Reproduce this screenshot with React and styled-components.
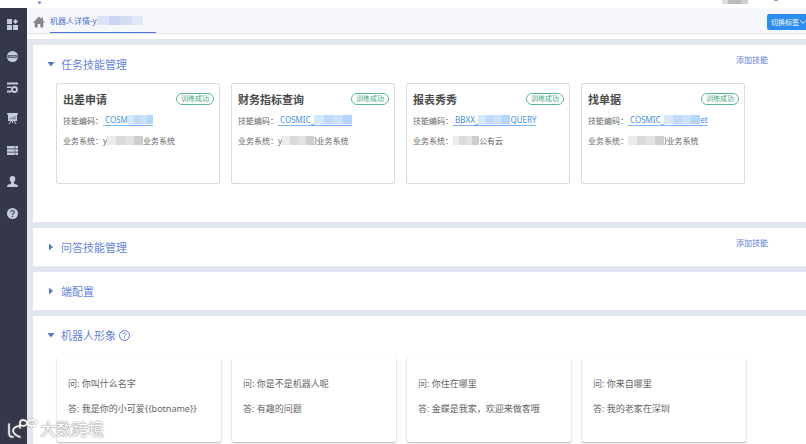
import React from 'react'
import styled, { createGlobalStyle } from 'styled-components'

const skills = [
  {
    title: '出差申请',
    code: { before: ' COSM', width: 25, after: '' },
    system: { before: 'y', width: 36, after: '业务系统' }
  },
  {
    title: '财务指标查询',
    code: { before: ' COSMIC_', width: 38, after: '' },
    system: { before: 'y', width: 32, after: ')业务系统' }
  },
  {
    title: '报表秀秀',
    code: { before: ' BBXX_', width: 32, after: 'QUERY' },
    system: { before: '', width: 26, after: '公有云' }
  },
  {
    title: '找单据',
    code: { before: ' COSMIC_', width: 36, after: 'et' },
    system: { before: '', width: 36, after: ')业务系统' }
  }
]

const dialogs = [
  { question: '你叫什么名字', answer: '我是你的小可爱{{botname}}' },
  { question: '你是不是机器人呢', answer: '有趣的问题' },
  { question: '你住在哪里', answer: '金蝶是我家，欢迎来做客哦' },
  { question: '你来自哪里', answer: '我的老家在深圳' }
]

const menu = [
  {
    label: '应用',
    icon: (
      <path d="M0 0h5v5H0zM0 6h5v5H0zM6 6h5v5H6zM8.5 0L11 2.5 8.5 5 6 2.5z" />
    )
  },
  {
    label: '机器人',
    icon: (
      <>
        <circle cx="5.5" cy="5.5" r="5.5" />
        <rect x="0.5" y="4" width="10" height="3" rx="1" fill="#5d637a" />
        <path d="M2 5.5h7" stroke="#8f97ab" />
      </>
    )
  },
  {
    label: '流程配置',
    icon: (
      <>
        <path d="M0 0.5h11v2H0zM0 4.5h4.500v1.5H0zM0 8.500h4.500v2H0z" />
        <circle
          cx="7.5"
          cy="7.5"
          r="2.5"
          fill="none"
          stroke="#c3cbdc"
          strokeWidth="1.8"
        />
      </>
    )
  },
  {
    label: '报表',
    icon: (
      <>
        <path d="M0 0h11v1.5h-1V8H1V1.5H0z" />
        <path d="M4 8L2 11M7 8l2 3M5.5 8v2" stroke="#c3cbdc" />
        <path
          d="M3 6.5V5M5 6.5V4M6.5 6.5V4.5M8 6.5V3"
          stroke="#5d637a"
          strokeWidth="0.8"
        />
      </>
    )
  },
  {
    label: '数据',
    icon: (
      <>
        <path d="M0 1h11v2.5H0zM0 4.300h11v2.5H0zM0 7.600h11v2.5H0z" />
        <path d="M8 1v9" stroke="#5d637a" strokeWidth="0.8" />
      </>
    )
  },
  {
    label: '用户',
    icon: (
      <path d="M5.5 0C7.5 0 8.4 1.3 8.3 3 8.2 4.7 7.4 5.8 6.8 6.3V7.5L10 8.7Q11 9.2 11 11H0Q0 9.2 1 8.7L4.2 7.5V6.3C3.6 5.8 2.8 4.7 2.7 3 2.6 1.3 3.5 0 5.5 0z" />
    )
  },
  {
    label: '帮助',
    icon: (
      <>
        <circle cx="5.5" cy="5.5" r="5.5" />
        <path
          d="M3.7 4.2C3.7 1.9 7.3 1.9 7.3 4.2 7.3 5.4 5.5 5.3 5.5 7M5.5 7.8V9"
          fill="none"
          stroke="#353849"
          strokeWidth="1.1"
        />
      </>
    )
  }
]

const Caret = ({ open }) => (
  <svg width="8" height="8" viewBox="0 0 8 8" fill="#5478d8" aria-hidden="true">
    <path d={open ? 'M0.5 2h7L4 6.5z' : 'M2 0.5v7L6 4z'} />
  </svg>
)

const Section = ({ title, open, action, help, grow, children }) => (
  <Panel $grow={grow}>
    <PanelHeader>
      <PanelTitle>
        <Toggle type="button" aria-expanded={!!open}>
          <Caret open={open} />
          {title}
        </Toggle>
        {help && (
          <HelpButton type="button" aria-label="帮助">
            <svg
              width="11"
              height="11"
              viewBox="0 0 11 11"
              fill="none"
              stroke="#5f7fdc"
            >
              <circle cx="5.5" cy="5.5" r="5" />
              <path d="M3.9 4.4C3.9 2.3 7.1 2.3 7.1 4.4 7.1 5.5 5.5 5.3 5.5 6.7M5.5 7.4v1" />
            </svg>
          </HelpButton>
        )}
      </PanelTitle>
      {action && <Action type="button">{action}</Action>}
    </PanelHeader>
    {children}
  </Panel>
)

const SkillCard = ({ title, code, system }) => (
  <Card>
    <CardHeader>
      <CardTitle>{title}</CardTitle>
      <Status>训练成功</Status>
    </CardHeader>
    <Field>
      技能编码：
      <CodeLink href="#">
        {code.before}
        <Mosaic $width={code.width} $tone="blue" />
        {code.after}
      </CodeLink>
    </Field>
    <Field>
      业务系统：
      <Value>
        {system.before}
        <Mosaic $width={system.width} $tone="grey" />
        {system.after}
      </Value>
    </Field>
  </Card>
)

const App = () => (
  <Page>
    <GlobalStyle />
    <TopBar>
      <Dot />
      <Account>
        <Avatar />
        <Bell />
      </Account>
    </TopBar>
    <Body>
      <Sidebar>
        <Menu>
          {menu.map(({ label, icon }) => (
            <MenuButton key={label} type="button" aria-label={label}>
              <svg width="11" height="11" viewBox="0 0 11 11" fill="#c3cbdc">
                {icon}
              </svg>
            </MenuButton>
          ))}
        </Menu>
      </Sidebar>
      <Main>
        <TabBar>
          <HomeLink href="#" aria-label="首页">
            <svg width="12" height="12" viewBox="0 0 12 12" fill="#858789">
              <path d="M6 0.5L8.5 3V1.5H10V4.5L12 6.6H10.3V11.5H7.3V8H4.7V11.5H1.7V6.6H0z" />
            </svg>
          </HomeLink>
          <Tab href="#">
            机器人详情-y
            <Mosaic $width={46} $tone="lavender" />
          </Tab>
          <SwitchButton type="button">
            切换标签
            <svg
              width="6"
              height="6"
              viewBox="0 0 6 6"
              fill="none"
              stroke="#fff"
              strokeWidth="0.8"
            >
              <path d="M0.5 1.5L3 4.5 5.5 1.5" />
            </svg>
          </SwitchButton>
        </TabBar>
        <Content>
          <Section title="任务技能管理" open action="添加技能">
            <SkillGrid>
              {skills.map(skill => (
                <SkillCard key={skill.title} {...skill} />
              ))}
            </SkillGrid>
          </Section>
          <Section title="问答技能管理" action="添加技能" />
          <Section title="端配置" />
          <Section title="机器人形象" open help grow>
            <DialogGrid>
              {dialogs.map(({ question, answer }) => (
                <DialogCard key={question}>
                  <Line>问: {question}</Line>
                  <Line>答: {answer}</Line>
                </DialogCard>
              ))}
            </DialogGrid>
          </Section>
        </Content>
      </Main>
    </Body>
    <Watermark>
      <Logo
        width="30"
        height="22"
        viewBox="0 0 30 22"
        fill="none"
        stroke="#fff"
        strokeWidth="1.5"
        strokeLinecap="round"
      >
        <path d="M1 6V15Q1 19 5 19M11 8Q5 9 5 13 6 17 12 19" />
        <path d="M12 10V5Q12 2 15 2 18 2 19.5 5 21 8 24 8 28 8 28 5 28 2 24 2 21 2 19.5 5 18 8 15 8 13 8 12 6" />
      </Logo>
      大数跨境
    </Watermark>
  </Page>
)

export default App

const GlobalStyle = createGlobalStyle`
  * {
    box-sizing: border-box;
  }

  body {
    margin: 0;
    background: #fff;
    color: #666;
    font-family: 'Noto Sans', 'Noto Sans CJK SC', sans-serif;
    font-size: 8px;
  }

  button {
    border: none;
    padding: 0;
    background: none;
    color: inherit;
    font: inherit;
    cursor: pointer;
  }

  svg {
    display: block;
    flex: none;
  }
`

const Page = styled.div`
  display: flex;
  flex-direction: column;
  position: relative;
  min-height: 100vh;
`

const TopBar = styled.header`
  display: flex;
  justify-content: space-between;
  height: 8px;
  padding: 0 28px 0 38px;
`

const Dot = styled.span`
  width: 3px;
  height: 3px;
  margin-top: 1px;
  border-radius: 50%;
  background: #9a7bea;
`

const Account = styled.div`
  display: flex;
  gap: 26px;
`

const Avatar = styled.span`
  width: 26px;
  height: 4px;
  background: linear-gradient(90deg, #dedede 25%, #bcbcbc 25% 75%, #cfcfcf 75%);
`

const Bell = styled.span`
  width: 4px;
  height: 1px;
  background: #8fa6d8;
`

const Body = styled.div`
  display: flex;
  flex: 1;
`

const Sidebar = styled.aside`
  flex: none;
  width: 27px;
  background: #353849;
`

const Menu = styled.nav`
  display: flex;
  flex-direction: column;
  height: 221px;
  padding-top: 1px;
`

const MenuButton = styled.button`
  display: flex;
  flex: 1;
  align-items: center;
  padding-left: 7px;
`

const Main = styled.main`
  display: flex;
  flex: 1;
  flex-direction: column;
  min-width: 0;
`

const TabBar = styled.nav`
  display: flex;
  height: 26px;
  padding-left: 6px;
  border-bottom: 1px solid #e4e6ea;
  background: #f5f7fa;
`

const HomeLink = styled.a`
  display: flex;
  align-items: center;
  padding-top: 3px;
`

const Tab = styled.a`
  display: flex;
  align-items: center;
  width: 106px;
  margin-left: 5px;
  border-bottom: 1px solid #4a70d9;
  color: #4a6fd6;
  text-decoration: none;
  white-space: nowrap;
`

const SwitchButton = styled.button`
  display: flex;
  align-items: center;
  gap: 1px;
  height: 16px;
  margin: 6px 0 0 auto;
  padding: 0 0 0 4px;
  border-radius: 2px 0 0 2px;
  background: #2d8cf0;
  color: #fff;
  font-size: 7px;
`

const Content = styled.div`
  display: flex;
  flex: 1;
  flex-direction: column;
  gap: 6px;
  margin-top: 5px;
  padding: 6px 0 0 6px;
  background: #e1e6ef;
`

const Panel = styled.section`
  flex: ${props => (props.$grow ? '1' : 'none')};
  background: #fff;
`

const PanelHeader = styled.div`
  display: flex;
  align-items: center;
  justify-content: space-between;
  height: 38px;
  padding: 0 38px 0 14px;
`

const PanelTitle = styled.h2`
  display: flex;
  align-items: center;
  gap: 3px;
  margin: 0;
  color: #6684df;
  font-size: 11px;
  font-weight: 400;
`

const Toggle = styled.button`
  display: flex;
  align-items: center;
  gap: 6px;
`

const HelpButton = styled.button`
  display: flex;
`

const Action = styled.button`
  padding-bottom: 10px;
  color: #5b78e3;
`

const SkillGrid = styled.div`
  display: grid;
  grid-template-columns: repeat(4, 1fr);
  gap: 11px;
  padding: 0 61px 38px 23px;
`

const DialogGrid = styled(SkillGrid)`
  padding: 3px 60px 2px 24px;
`

const Card = styled.article`
  min-height: 101px;
  padding: 4px 5px 4px 6px;
  border: 1px solid #d9dbdf;
  border-radius: 2px;
`

const CardHeader = styled.div`
  display: flex;
  align-items: center;
  justify-content: space-between;
  height: 22px;
`

const CardTitle = styled.h3`
  margin: 0;
  color: #4a4a4a;
  font-size: 11px;
  font-weight: 700;
`

const Status = styled.span`
  height: 12px;
  padding: 0 4px;
  border: 1px solid #5cba8e;
  border-radius: 6px;
  color: #45a87b;
  font-size: 7px;
  line-height: 10px;
`

const Field = styled.div`
  display: flex;
  align-items: center;
  height: 20px;
  white-space: pre;
`

const Value = styled.span`
  display: flex;
  align-items: center;
`

const CodeLink = styled.a`
  display: flex;
  align-items: center;
  border-bottom: 1px solid #79b4f5;
  color: #3f8fe8;
  line-height: 10px;
  text-decoration: none;
  white-space: pre;
`

const tones = {
  blue: ['#d5e7fc', '#c0dafa', '#cbe1fb', '#b4d4fa'],
  lavender: ['#dde3f5', '#cbd5f2', '#d6dcf2', '#e3e8f6'],
  grey: ['#ececec', '#dadada', '#e2e2e2', '#cecece']
}

const Mosaic = styled.span`
  flex: none;
  width: ${props => props.$width}px;
  height: 9px;
  background: ${props => {
    const [a, b, c, d] = tones[props.$tone]
    return `linear-gradient(90deg, ${a} 25%, ${b} 25% 50%, ${c} 50% 75%, ${d} 75%)`
  }};
`

const DialogCard = styled.article`
  min-height: 85px;
  padding: 14px 11px;
  border-radius: 2px;
  box-shadow: 0 1px 2px rgba(0, 0, 0, 0.3);
`

const Line = styled.p`
  margin: 0;
  font-size: 9px;
  line-height: 25px;
  white-space: nowrap;
`

const Watermark = styled.div`
  display: flex;
  align-items: center;
  gap: 2px;
  position: absolute;
  bottom: 4px;
  left: 8px;
  color: #fff;
  font-size: 16px;
  line-height: 22px;
  text-shadow: 0 0 2px #888, 0 0 1px #888;
`

const Logo = styled.svg`
  filter: drop-shadow(0 0 1px #888);
`
